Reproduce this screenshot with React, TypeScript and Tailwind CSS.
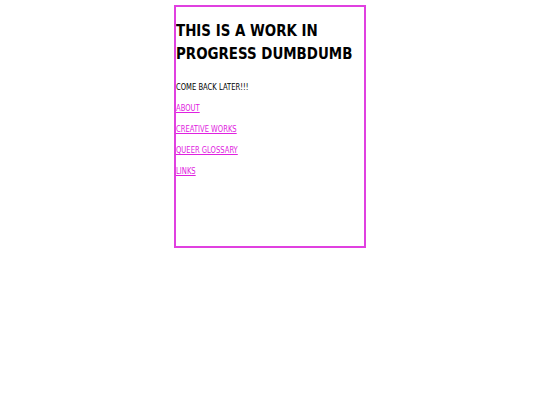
export default function App() {
  const links = ['ABOUT', 'CREATIVE WORKS', 'QUEER GLOSSARY', 'LINKS']
  return (
    <div className="min-h-screen bg-white pt-[5px] font-['DejaVu_Sans_Condensed','DejaVu_Sans',sans-serif]">
      <div className="mx-auto h-[243px] w-[192px] overflow-hidden border-2 border-[#e040e0]">
        <h1 className="mt-[12px] w-[210px] origin-left scale-x-[0.92] text-[16.2px] font-bold leading-[23px] text-black">
          THIS IS A WORK IN
          <br />
          PROGRESS DUMBDUMB
        </h1>
        <div className="w-[220px] origin-left scale-x-[0.84]">
          <p className="mt-[16px] text-[9px] leading-[12px] text-black">COME BACK LATER!!!</p>
          {links.map((l) => (
            <p key={l} className="mt-[9px] text-[9px] leading-[12px]">
              <a href="#" className="text-[#e020e0] underline">
                {l}
              </a>
            </p>
          ))}
        </div>
      </div>
    </div>
  )
}
